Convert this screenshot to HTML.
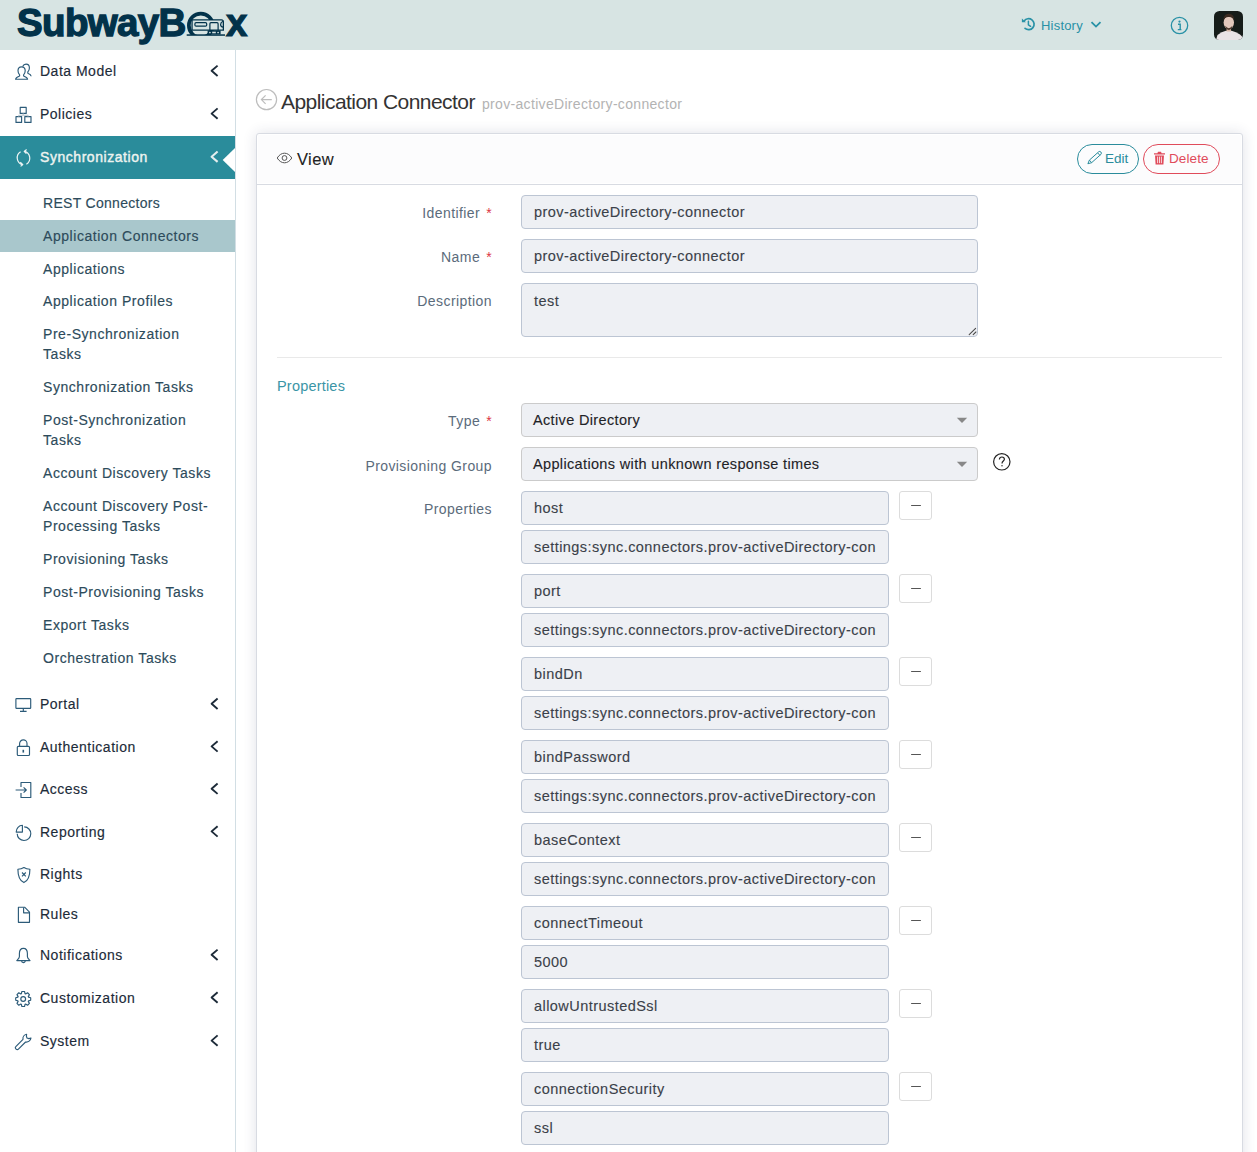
<!DOCTYPE html>
<html><head><meta charset="utf-8"><style>
*{box-sizing:border-box;margin:0;padding:0}
html,body{width:1257px;height:1152px;overflow:hidden;background:#fff;font-family:"Liberation Sans",sans-serif;position:relative}
.abs{position:absolute}
.hdr{position:absolute;left:0;top:0;width:1257px;height:50px;background:#d7e4e3}
.side{position:absolute;left:0;top:50px;width:236px;height:1102px;border-right:1px solid #d2dee4;background:#fff}
.ti{position:absolute;left:40px;font-size:14px;line-height:20px;color:#1d2b39;white-space:nowrap;letter-spacing:.5px;-webkit-text-stroke-width:.15px}
.si{position:absolute;left:43px;font-size:14px;line-height:20px;color:#2d4b5b;white-space:nowrap;letter-spacing:.55px;-webkit-text-stroke-width:.15px}
.chev{position:absolute;left:210px}
.lbl{position:absolute;right:765px;font-size:14px;line-height:20px;color:#5b6b7b;white-space:nowrap;text-align:right;letter-spacing:.42px}
.lbl b{color:#dc3545;font-weight:400;margin-left:6px}
.inp{position:absolute;left:521px;width:457px;height:34px;background:#eef0f4;border:1px solid #bcc5d3;border-radius:4px;font-size:14.5px;color:#3b4149;padding:0 12px;line-height:32px;white-space:nowrap;overflow:hidden;letter-spacing:.45px;-webkit-text-stroke-width:.12px}
.sel{border-color:#cbcbcb;color:#1f2327;padding-left:11px;letter-spacing:.35px}
.k{width:368px}
.mb{position:absolute;left:899px;width:33px;height:29px;border:1px solid #dcdcdc;border-radius:3px;background:#fff}
.mb:after{content:"";position:absolute;left:10.5px;top:13px;width:10px;height:1.3px;background:#555;border-radius:1px}
</style></head><body>
<svg class="abs" style="left:255px;top:88px" width="23" height="23" viewBox="0 0 23 23" fill="none" stroke="#bdbdbd" stroke-width="1.2"><circle cx="11.5" cy="11.6" r="10.1"/><path d="M6.4 11.6 H16.8 M10.6 7.4 L6.4 11.6 L10.6 15.8"/></svg>
<div class="abs" style="left:281px;top:88px;font-size:21px;line-height:28px;color:#333;letter-spacing:-0.55px;white-space:nowrap">Application Connector</div>
<div class="abs" style="left:482px;top:94px;font-size:14px;line-height:20px;color:#b3b3b3;letter-spacing:.32px;white-space:nowrap">prov-activeDirectory-connector</div>
<div class="abs" style="left:256px;top:133px;width:987px;height:1100px;background:#fff;border:1px solid #d8dbe2;border-radius:3px;box-shadow:0 0 14px rgba(40,50,90,.14)"></div>
<div class="abs" style="left:258px;top:135px;width:983px;height:48px;background:#fcfcfd"></div><div class="abs" style="left:257px;top:184px;width:985px;height:1px;background:#d8dbe2"></div>
<svg class="abs" style="left:276px;top:151px" width="17" height="14" viewBox="0 0 17 14" fill="none" stroke="#555" stroke-width="1"><path d="M1.2 7 C3.4 3.6 5.8 2.2 8.5 2.2 C11.2 2.2 13.6 3.6 15.8 7 C13.6 10.4 11.2 11.8 8.5 11.8 C5.8 11.8 3.4 10.4 1.2 7 Z"/><circle cx="8.5" cy="7" r="2.4"/></svg>
<div class="abs" style="left:297px;top:149px;font-size:16.5px;line-height:20px;color:#222;letter-spacing:.4px;-webkit-text-stroke-width:.1px">View</div>
<div class="abs" style="left:1077px;top:144px;width:62px;height:30px;border:1px solid #2a8c9c;border-radius:15px"></div>
<svg class="abs" style="left:1087px;top:150px" width="16" height="16" viewBox="0 0 16 16" fill="none" stroke="#2a8c9c" stroke-width="1"><path d="M0.9 13.75 L2.37 10.13 L11.69 1.81 Q12.8 0.9 13.9 2.0 Q14.9 3.1 13.95 4.35 L4.63 12.67 Z M2.37 10.13 L4.63 12.67 M10.7 2.9 L12.9 5.3"/></svg>
<div class="abs" style="left:1105px;top:149px;font-size:13.5px;line-height:20px;color:#2a8c9c;letter-spacing:0">Edit</div>
<div class="abs" style="left:1143px;top:144px;width:77px;height:30px;border:1px solid #e04b5b;border-radius:15px"></div>
<svg class="abs" style="left:1153px;top:151px" width="13" height="14" viewBox="0 0 13 14"><path d="M1 2.2 H12 V3.6 H1 Z M4.4 2.2 L5 0.8 H8 L8.6 2.2 Z" fill="#e04b5b"/><path d="M2 4.4 H11 L10.4 13.4 H2.6 Z" fill="#e04b5b"/><path d="M4.6 5.6 V12.2 M6.5 5.6 V12.2 M8.4 5.6 V12.2" stroke="#fff" stroke-width=".8"/></svg>
<div class="abs" style="left:1169px;top:149px;font-size:13.5px;line-height:20px;color:#e04b5b;letter-spacing:.1px">Delete</div>
<div class="lbl" style="top:203.05px">Identifier<b>*</b></div>
<div class="inp " style="top:195px;height:34px">prov-activeDirectory-connector</div>
<div class="lbl" style="top:247.05px">Name<b>*</b></div>
<div class="inp " style="top:239px;height:34px">prov-activeDirectory-connector</div>
<div class="lbl" style="top:290.75px">Description</div>
<div class="inp" style="top:283px;height:54px;line-height:20px;padding-top:7px">test</div>
<svg class="abs" style="left:966px;top:325px" width="11" height="11" viewBox="0 0 11 11" stroke="#4a4a4a" stroke-width="1.1" stroke-linecap="round"><path d="M3.2 9.6 L9.6 3.4 M7.2 9.6 L9.9 7"/></svg>
<div class="abs" style="left:277px;top:357px;width:945px;height:1px;background:#e9e9e9"></div>
<div class="abs" style="left:277px;top:376px;font-size:14.5px;line-height:20px;color:#3a95a6;letter-spacing:.2px">Properties</div>
<div class="lbl" style="top:411.15px">Type<b>*</b></div>
<div class="inp sel" style="top:403px;height:34px;line-height:32px">Active Directory</div>
<div class="lbl" style="top:455.55px">Provisioning Group</div>
<div class="inp sel" style="top:447px;height:34px;line-height:32px">Applications with unknown response times</div>
<svg class="abs" style="left:956px;top:417px" width="12" height="7" viewBox="0 0 12 7"><path d="M0.8 0.8 H11.2 L6 6 Z" fill="#888"/></svg>
<svg class="abs" style="left:956px;top:461px" width="12" height="7" viewBox="0 0 12 7"><path d="M0.8 0.8 H11.2 L6 6 Z" fill="#888"/></svg>
<svg class="abs" style="left:992px;top:452px" width="20" height="20" viewBox="0 0 20 20" fill="none" stroke="#222" stroke-width="1.2"><circle cx="9.8" cy="9.8" r="8.2"/><path d="M7.4 7.6 C7.4 5.9 8.5 5 9.9 5 C11.3 5 12.4 5.9 12.4 7.3 C12.4 9 10 9.2 10 11.4" /><circle cx="10" cy="13.8" r=".7" fill="#222" stroke="none"/></svg>
<div class="lbl" style="top:498.65px">Properties</div>
<div class="inp k" style="top:491px;height:34px">host</div>
<div class="inp k" style="top:530px;height:34px">settings:sync.connectors.prov-activeDirectory-con</div>
<div class="mb" style="top:491px"></div>
<div class="inp k" style="top:574px;height:34px">port</div>
<div class="inp k" style="top:613px;height:34px">settings:sync.connectors.prov-activeDirectory-con</div>
<div class="mb" style="top:574px"></div>
<div class="inp k" style="top:657px;height:34px">bindDn</div>
<div class="inp k" style="top:696px;height:34px">settings:sync.connectors.prov-activeDirectory-con</div>
<div class="mb" style="top:657px"></div>
<div class="inp k" style="top:740px;height:34px">bindPassword</div>
<div class="inp k" style="top:779px;height:34px">settings:sync.connectors.prov-activeDirectory-con</div>
<div class="mb" style="top:740px"></div>
<div class="inp k" style="top:823px;height:34px">baseContext</div>
<div class="inp k" style="top:862px;height:34px">settings:sync.connectors.prov-activeDirectory-con</div>
<div class="mb" style="top:823px"></div>
<div class="inp k" style="top:906px;height:34px">connectTimeout</div>
<div class="inp k" style="top:945px;height:34px">5000</div>
<div class="mb" style="top:906px"></div>
<div class="inp k" style="top:989px;height:34px">allowUntrustedSsl</div>
<div class="inp k" style="top:1028px;height:34px">true</div>
<div class="mb" style="top:989px"></div>
<div class="inp k" style="top:1072px;height:34px">connectionSecurity</div>
<div class="inp k" style="top:1111px;height:34px">ssl</div>
<div class="mb" style="top:1072px"></div>
<div class="hdr">
<div class="abs" style="left:17px;top:-2px;font-size:38.5px;font-weight:700;color:#02324a;line-height:50px;letter-spacing:-0.65px;white-space:nowrap;-webkit-text-stroke:1.3px #02324a">SubwayB</div>
<svg class="abs" style="left:183px;top:8px" width="46" height="32" viewBox="0 0 46 32">
 <defs><clipPath id="lc"><rect x="0" y="0" width="46" height="27"/></clipPath></defs>
 <circle cx="17.8" cy="17.5" r="11.95" fill="none" stroke="#02324a" stroke-width="3.7" clip-path="url(#lc)"/>
 <path d="M9.05 11.95 H38.4 Q40.35 11.95 40.35 13.9 V22.05 H9.05 Z" fill="#d7e4e3" stroke="#02324a" stroke-width="1.3"/>
 <rect x="11.9" y="14.7" width="11.8" height="3.5" rx="1.2" fill="none" stroke="#02324a" stroke-width="1.2"/>
 <path d="M26.9 22.4 V15.8 Q26.9 14.7 28 14.7 H34 Q35.1 14.7 35.1 15.8 V22.4" fill="none" stroke="#02324a" stroke-width="1.2"/>
 <path d="M40.2 13.2 Q37.6 14.2 37.6 16.4 Q37.6 18.8 40.2 19.2" fill="none" stroke="#02324a" stroke-width="1.2"/>
 <rect x="24.6" y="22.4" width="13" height="4" fill="#02324a"/>
 <circle cx="26.9" cy="24.5" r="0.85" fill="#d7e4e3"/><rect x="29.2" y="23.7" width="3.6" height="1.6" fill="#d7e4e3"/><circle cx="35.1" cy="24.5" r="0.85" fill="#d7e4e3"/>
 <rect x="3.7" y="26.3" width="38.3" height="1.5" fill="#02324a"/>
</svg>
<div class="abs" style="left:226px;top:-2px;font-size:38.5px;font-weight:700;color:#02324a;line-height:50px;white-space:nowrap;-webkit-text-stroke:1.1px #02324a">x</div>
<svg class="abs" style="left:1021px;top:17px" width="15" height="15" viewBox="0 0 15 15">
 <path d="M3.15 3.97 A5.5 5.5 0 1 1 4.06 11.41" fill="none" stroke="#2891a6" stroke-width="1.7" stroke-linecap="round"/>
 <path d="M0.9 1.6 L0.9 5.3 L4.9 5.3 Z" fill="#2891a6"/>
 <path d="M7.4 4.3 V7.8 L9.6 9.3" fill="none" stroke="#2891a6" stroke-width="1.5" stroke-linecap="round"/>
</svg>
<div class="abs" style="left:1041px;top:16px;font-size:13px;line-height:20px;color:#2891a6;letter-spacing:.2px">History</div>
<svg class="abs" style="left:1090px;top:20px" width="12" height="9" viewBox="0 0 12 9"><path d="M1.5 2.2 L6 6.6 L10.5 2.2" fill="none" stroke="#2891a6" stroke-width="1.8"/></svg>
<svg class="abs" style="left:1170px;top:16px" width="19" height="19" viewBox="0 0 19 19">
 <circle cx="9.5" cy="9.5" r="8.2" fill="none" stroke="#2891a6" stroke-width="1.3"/>
 <circle cx="9.5" cy="5.6" r="1.1" fill="#2891a6"/>
 <path d="M8 8.2 H10.2 V13.4 M7.8 13.6 H11.4" fill="none" stroke="#2891a6" stroke-width="1.4"/>
</svg>
<svg class="abs" style="left:1214px;top:11px" width="29" height="29" viewBox="0 0 29 29">
 <defs><clipPath id="av"><rect width="29" height="29" rx="5.5"/></clipPath></defs>
 <g clip-path="url(#av)">
 <rect width="29" height="29" fill="#161c19"/>
 <path d="M2 29 L3.5 24 Q7.5 20.8 12 19.8 L17.5 19.8 Q22 20.8 26 23.5 L29 26.5 V29 Z" fill="#e9e3e5"/>
 <rect x="12.6" y="15.5" width="4.4" height="5" fill="#d6b6a6"/>
 <ellipse cx="14.8" cy="11.6" rx="5.2" ry="6.4" fill="#e2c8bc"/>
 <path d="M9.6 9.5 Q9.3 2.6 14.8 2.7 Q20.3 2.6 20.1 9.5 Q19.2 5.8 14.8 6 Q10.4 5.8 9.6 9.5 Z" fill="#3b2a20"/>
 <path d="M11.2 14.8 Q14.8 19.6 18.4 14.8 Q18 18.6 14.8 19.1 Q11.6 18.6 11.2 14.8 Z" fill="#4e3a2e"/>
 </g>
</svg>
</div>
<div class="side">
<div class="abs" style="left:0;top:86px;width:235px;height:43px;background:#2a8c9b"></div>
<svg class="abs" style="left:222px;top:98px" width="13" height="24" viewBox="0 0 13 24"><path d="M13 0 L0.7 12 L13 24 Z" fill="#fff"/></svg>
<div class="abs" style="left:0;top:170px;width:235px;height:32px;background:#a9c7cc"></div>
<div class="ti" style="top:10.95px">Data Model</div>
<div class="ti" style="top:53.75px">Policies</div>
<div class="ti" style="top:96.85px;color:#edf3f0;-webkit-text-stroke-width:.4px;letter-spacing:.55px">Synchronization</div>
<div class="si" style="top:143.15px"><span style="letter-spacing:.3px">REST Connectors</span></div>
<div class="si" style="top:175.75px">Application Connectors</div>
<div class="si" style="top:208.65px">Applications</div>
<div class="si" style="top:241.15px">Application Profiles</div>
<div class="si" style="top:274.25px">Pre-Synchronization<br>Tasks</div>
<div class="si" style="top:327.05px">Synchronization Tasks</div>
<div class="si" style="top:360.25px">Post-Synchronization<br>Tasks</div>
<div class="si" style="top:412.95px">Account Discovery Tasks</div>
<div class="si" style="top:445.85px">Account Discovery Post-<br>Processing Tasks</div>
<div class="si" style="top:498.75px">Provisioning Tasks</div>
<div class="si" style="top:531.65px">Post-Provisioning Tasks</div>
<div class="si" style="top:564.55px">Export Tasks</div>
<div class="si" style="top:597.95px">Orchestration Tasks</div>
<div class="ti" style="top:643.90px">Portal</div>
<div class="ti" style="top:686.55px">Authentication</div>
<div class="ti" style="top:728.85px">Access</div>
<div class="ti" style="top:771.55px">Reporting</div>
<div class="ti" style="top:813.85px">Rights</div>
<div class="ti" style="top:853.75px">Rules</div>
<div class="ti" style="top:894.95px">Notifications</div>
<div class="ti" style="top:937.65px">Customization</div>
<div class="ti" style="top:980.75px">System</div>
<svg class="abs" style="left:0;top:-50px" width="235" height="1152" viewBox="0 0 235 1152" fill="none" stroke="#2c5b79" stroke-width="1.15" stroke-linejoin="round"><path d="M217.6 65.60 L211.6 70.80 L217.6 76.00" fill="none" stroke="#1d2b39" stroke-width="1.9"/><path d="M217.6 108.40 L211.6 113.60 L217.6 118.80" fill="none" stroke="#1d2b39" stroke-width="1.9"/><path d="M217.6 698.55 L211.6 703.75 L217.6 708.95" fill="none" stroke="#1d2b39" stroke-width="1.9"/><path d="M217.6 741.20 L211.6 746.40 L217.6 751.60" fill="none" stroke="#1d2b39" stroke-width="1.9"/><path d="M217.6 783.50 L211.6 788.70 L217.6 793.90" fill="none" stroke="#1d2b39" stroke-width="1.9"/><path d="M217.6 826.20 L211.6 831.40 L217.6 836.60" fill="none" stroke="#1d2b39" stroke-width="1.9"/><path d="M217.6 949.60 L211.6 954.80 L217.6 960.00" fill="none" stroke="#1d2b39" stroke-width="1.9"/><path d="M217.6 992.30 L211.6 997.50 L217.6 1002.70" fill="none" stroke="#1d2b39" stroke-width="1.9"/><path d="M217.6 1035.40 L211.6 1040.60 L217.6 1045.80" fill="none" stroke="#1d2b39" stroke-width="1.9"/><path d="M217.6 151.50 L211.6 156.70 L217.6 161.90" fill="none" stroke="#e4eeee" stroke-width="2.1"/><path d="M21.5 66.8 C19.3 66.8 18 68.5 18 70.8 C18 72.6 18.8 74 19.6 74.8 L19.6 76 C18 76.6 15.8 77.2 15.6 79.2 L27.6 79.2 C27.4 77.2 25.2 76.6 23.6 76 L23.6 74.8 C24.4 74 25.2 72.6 25.2 70.8 C25.2 68.5 23.8 66.8 21.5 66.8 Z"/><path d="M22.6 66.6 C23.4 64.9 24.6 64.2 26 64.2 C28.2 64.2 29.4 66 29.4 68.1 C29.4 69.9 28.6 71.2 27.8 72 L27.8 73.2 C29.4 73.8 31 74.5 31.2 76.2"/><rect x="20.2" y="107.4" width="6" height="6"/><rect x="16" y="116.6" width="5.6" height="5.8"/><rect x="24.8" y="116.6" width="6.2" height="5.8"/><path d="M18.8 116.6 V115.2 H28 V116.6 M23.2 113.4 V115.2" stroke="#b8c4cc"/><g stroke="#eef5f5" stroke-width="1.2"><path d="M20.6 151.8 A7 7 0 0 0 22.6 164.6"/><path d="M20.3 162.2 L22.8 164.6 L20.6 166.4"/><path d="M26.4 164.2 A7 7 0 0 0 24.4 151.4"/><path d="M26.6 149.6 L24.2 151.4 L26.4 153.6"/></g><rect x="15.9" y="698.6" width="14.8" height="9.8" rx="0.6"/><path d="M23.3 708.6 V711.2 M20 711.4 H26.6"/><rect x="17.3" y="746.3" width="12.2" height="9.2" rx="1"/><path d="M19.6 746.3 V743.6 A3.7 3.7 0 0 1 27 743.6 V746.3"/><path d="M23.3 749.8 V752.6" stroke-width="1.6"/><path d="M21 787 V782.5 H30.8 V797.5 H21 V793"/><path d="M15.6 790 H26.2 M23.6 787.4 L26.3 790 L23.6 792.6" /><path d="M24.2 826.9 A6.8 6.8 0 1 1 17.2 833.7"/><path d="M22.4 825.3 V832.1 H16.2 A6.4 6.8 0 0 1 22.4 825.3 Z"/><path d="M23.9 867.5 C22.3 868.6 20 869.2 17.9 869.2 C17.9 875 19.5 880.6 23.9 882.6 C28.3 880.6 29.9 875 29.9 869.2 C27.8 869.2 25.5 868.6 23.9 867.5 Z"/><path d="M22 872.5 L25.8 876.3 M25.8 872.5 L22 876.3"/><path d="M18.4 907.2 H24.6 L29.5 912.1 V922.3 H18.4 Z"/><path d="M23.6 907.4 V912.8 H29.4"/><path d="M23.4 948.3 C20.6 948.3 19.4 950.6 19.4 953.6 V956.4 C19.4 958.2 17.4 959.6 16.8 960.6 H30 C29.4 959.6 27.4 958.2 27.4 956.4 V953.6 C27.4 950.6 26.2 948.3 23.4 948.3 Z"/><path d="M21.6 960.8 A1.8 1.8 0 0 0 25.2 960.8"/><path d="M28.47 997.10 L30.69 997.69 L30.69 1000.31 L28.47 1000.90 L28.27 1001.38 L29.42 1003.37 L27.57 1005.22 L25.58 1004.07 L25.10 1004.27 L24.51 1006.49 L21.89 1006.49 L21.30 1004.27 L20.82 1004.07 L18.83 1005.22 L16.98 1003.37 L18.13 1001.38 L17.93 1000.90 L15.71 1000.31 L15.71 997.69 L17.93 997.10 L18.13 996.62 L16.98 994.63 L18.83 992.78 L20.82 993.93 L21.30 993.73 L21.89 991.51 L24.51 991.51 L25.10 993.73 L25.58 993.93 L27.57 992.78 L29.42 994.63 L28.27 996.62 Z"/><circle cx="23.2" cy="999" r="2.4"/><path d="M26.6 1034.2 C24.2 1034.6 22.6 1036.8 23 1039.4 L15.8 1046.6 C15.2 1047.2 15.2 1048.2 15.8 1048.8 L16.2 1049.2 C16.8 1049.8 17.8 1049.8 18.4 1049.2 L25.6 1042 C28.2 1042.4 30.6 1040.6 31 1038 L28.8 1038.6 L27 1038 L26.4 1036.2 Z"/></svg>
</div>
</body></html>
